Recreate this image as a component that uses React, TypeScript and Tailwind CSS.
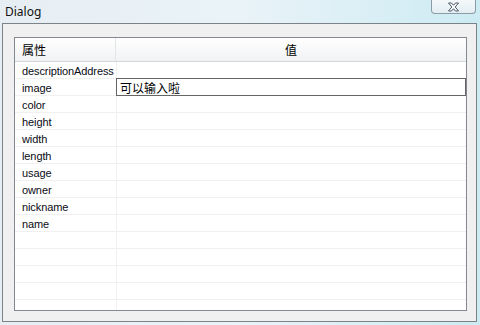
import React from "react";

const names = [
  "descriptionAddress",
  "image",
  "color",
  "height",
  "width",
  "length",
  "usage",
  "owner",
  "nickname",
  "name",
  "",
  "",
  "",
  "",
  "",
];

export default function App() {
  return (
    <div
      className="relative w-[480px] h-[325px] overflow-hidden flex flex-col bg-gradient-to-r from-[#e7eef3] via-[#e9f3f8] to-[#cdebf3]"
      style={{ fontFamily: "Tahoma, 'Liberation Sans', 'Noto Sans CJK SC', sans-serif" }}
    >
      {/* title bar */}
      <div className="h-[23px] shrink-0 flex items-center pl-[5px]">
        <span className="text-[12px] text-[#101010] leading-none" style={{ fontFamily: "'Noto Sans', 'Liberation Sans', sans-serif" }}>
          Dialog
        </span>
      </div>
      <div className="absolute left-[431px] top-0 w-[45px] h-[14px] rounded-b-[4px] border border-t-0 border-[#8d9ba7] bg-gradient-to-b from-[#f4f8fa] to-[#e3eef3] flex items-center justify-center">
        <svg width="13" height="10" viewBox="0 0 13 10">
          <path
            d="M1.5 1 H4.5 L6.5 3.3 L8.5 1 H11.5 L8.2 5 L11.5 9 H8.5 L6.5 6.7 L4.5 9 H1.5 L4.8 5 Z"
            fill="#ffffff"
            stroke="#4b5865"
            strokeWidth="1"
            strokeLinejoin="round"
          />
        </svg>
      </div>

      {/* client */}
      <div className="ml-[2px] mr-[3px] h-[299px] border border-[#7b8288] bg-[#f0f0f0] pt-[13px] pl-[11px] pr-[9px] pb-[10px] flex">
        <div className="flex-1 border border-[#828790] bg-white flex flex-col overflow-hidden">
          {/* header */}
          <div className="h-[24px] shrink-0 flex border-b border-[#d5d5d5] bg-gradient-to-b from-[#ffffff] to-[#f1f2f4]">
            <div className="w-[101px] border-r border-[#e3e4e6] flex items-center pl-[7px]">
              <span className="text-[12px] text-black" style={{ fontFamily: "'Noto Sans CJK SC', sans-serif" }}>属性</span>
            </div>
            <div className="flex-1 flex items-center justify-center">
              <span className="text-[12px] text-black" style={{ fontFamily: "'Noto Sans CJK SC', sans-serif" }}>值</span>
            </div>
          </div>
          {/* rows */}
          <div className="flex-1 flex flex-col overflow-hidden">
            {names.map((n, i) => (
              <div key={i} className="h-[17px] shrink-0 flex border-b border-[#f0f0f0]">
                <div className="w-[102px] border-r border-[#f0f0f0] pl-[7px] pt-[2px] flex items-center">
                  <span className="text-[11px] leading-none text-[#0a0a14] tracking-[-0.1px]" style={{ fontFamily: "'Liberation Sans', sans-serif" }}>{n}</span>
                </div>
                <div className="flex-1 relative">
                  {i === 1 && (
                    <div className="absolute -left-[1px] -top-[1px] right-[0px] -bottom-[1px] border border-[#646464] bg-white flex items-center pl-[3px] pt-[1px]">
                      <span className="text-[12px] leading-none text-black" style={{ fontFamily: "'Noto Sans CJK SC', sans-serif" }}>可以输入啦</span>
                    </div>
                  )}
                </div>
              </div>
            ))}
          </div>
        </div>
      </div>
    </div>
  );
}
